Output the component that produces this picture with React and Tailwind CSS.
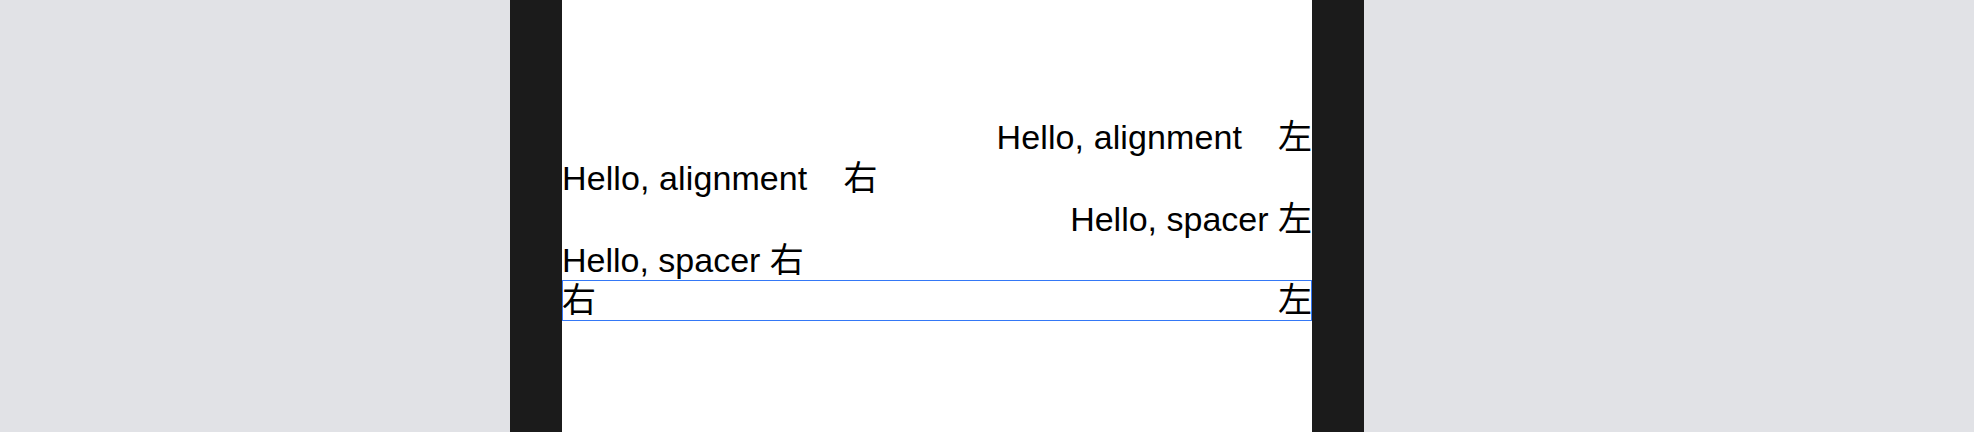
import React from 'react';

const font = { fontFamily: '"Liberation Sans", "Noto Sans CJK JP", sans-serif' };

const Row = ({ children, className = '' }) => (
  <div className={`flex items-center h-[41px] text-[34px] leading-[41px] text-black whitespace-nowrap ${className}`}>
    {children}
  </div>
);

const App = () => {
  return (
    <div className="w-[1974px] h-[432px] bg-[#e1e2e6] flex overflow-hidden" style={font}>
      <div className="ml-[510px] flex h-full">
        <div className="w-[52px] h-full bg-[#1b1b1b]"></div>
        <div className="w-[750px] h-full bg-white pt-[117px] flex flex-col">
          <Row className="justify-end">
            <span className="tracking-[0.1px]">Hello, alignment</span>
            <span className="ml-[36px]">左</span>
          </Row>
          <Row>
            <span className="tracking-[0.1px]">Hello, alignment</span>
            <span className="ml-[36px]">右</span>
          </Row>
          <Row className="justify-end">
            <span>Hello, spacer 左</span>
          </Row>
          <Row>
            <span>Hello, spacer 右</span>
          </Row>
          <div className="mt-[-1px] h-[41px] border border-[#3478f6] flex justify-between items-center text-[34px] leading-[39px] text-black">
            <span className="-ml-px">右</span>
            <span className="-mr-px">左</span>
          </div>
        </div>
        <div className="w-[52px] h-full bg-[#1b1b1b]"></div>
      </div>
    </div>
  );
};

export default App;
